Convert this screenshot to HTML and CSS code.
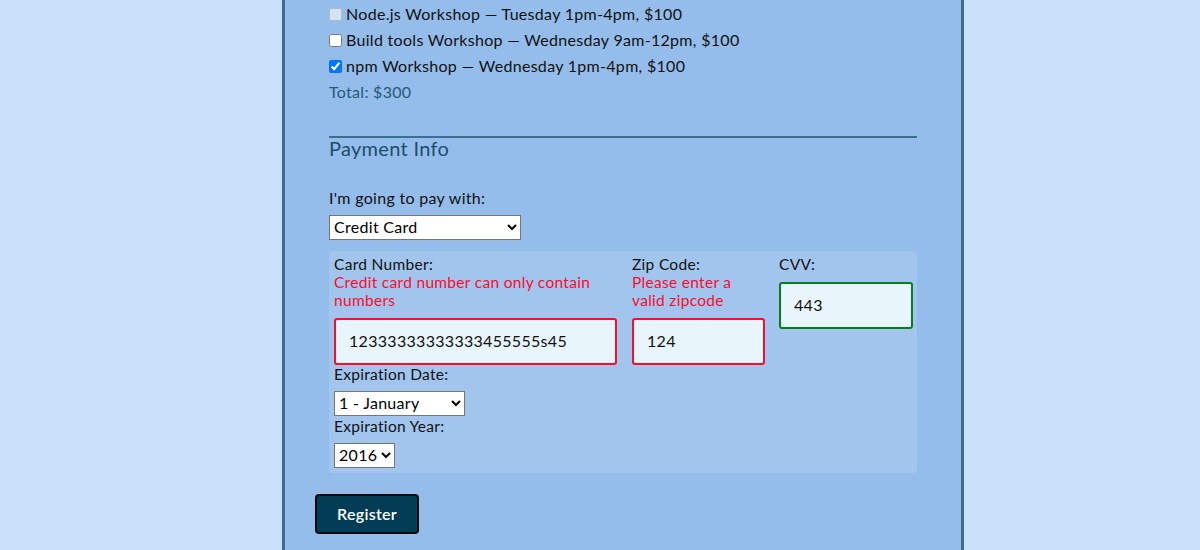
FILE: index.html
```html
<!DOCTYPE html>
<html>
<head>
<meta charset="utf-8">
<link rel="stylesheet" href="styles.css">
</head>
<body>
<div class="page">
  <form class="card">
    <div class="content">
      <ul class="workshops">
        <li><input type="checkbox" disabled><span>Node.js Workshop — Tuesday 1pm-4pm, $100</span></li>
        <li><input type="checkbox"><span>Build tools Workshop — Wednesday 9am-12pm, $100</span></li>
        <li><input type="checkbox" checked><span>npm Workshop — Wednesday 1pm-4pm, $100</span></li>
        <li class="total">Total: $300</li>
      </ul>
      <h2 class="section-title">Payment Info</h2>
      <label class="pay-label">I'm going to pay with:</label>
      <select class="pay-select">
        <option>Credit Card</option>
        <option>PayPal</option>
        <option>Bitcoin</option>
      </select>
      <div class="cc-box">
        <div class="cc-grid">
          <div class="field">
            <label>Card Number:</label>
            <div class="error">Credit card number can only contain numbers</div>
            <input class="text-input invalid" type="text" value="12333333333333455555s45">
          </div>
          <div class="field">
            <label>Zip Code:</label>
            <div class="error">Please enter a valid zipcode</div>
            <input class="text-input invalid" type="text" value="124">
          </div>
          <div class="field">
            <label>CVV:</label>
            <input class="text-input valid" type="text" value="443">
          </div>
        </div>
        <div class="exp">
          <label>Expiration Date:</label>
          <select class="month-select">
            <option>1 - January</option>
          </select>
          <label>Expiration Year:</label>
          <select class="year-select">
            <option>2016</option>
          </select>
        </div>
      </div>
    </div>
    <div class="actions">
      <button type="button" class="register">Register</button>
    </div>
  </form>
</div>
</body>
</html>
```
FILE: styles.css
```css
* { box-sizing: border-box; }
html, body {
  margin: 0;
  padding: 0;
  background: #cbe1fa;
  font-family: Lato, "Noto Sans", sans-serif;
  color: #111;
  font-size: 16px;
  letter-spacing: 0.3px;
}
.page {
  padding-left: 282px;
  height: 550px;
  overflow: hidden;
}
.card {
  width: 682px;
  height: 560px;
  background: #94bdeb;
  border-left: 3px solid #3b6e90;
  border-right: 3px solid #3b6e90;
}
.content {
  padding: 1px 44px 0 44px;
}
.workshops {
  list-style: none;
  margin: 0;
  padding: 0;
}
.workshops li {
  display: flex;
  align-items: center;
  height: 26px;
  line-height: 26px;
}
.workshops input {
  margin: 0 4px 0 0;
  width: 13px;
  height: 13px;
}
.total {
  color: #255978;
}
.section-title {
  margin: 31px 0 0 0;
  border-top: 2px solid #3b6e90;
  font-weight: normal;
  font-size: 20px;
  line-height: 20px;
  padding-top: 0;
  color: #1c4e6b;
}
.pay-label {
  display: block;
  margin-top: 30px;
  line-height: 20px;
}
select {
  font-family: inherit;
  font-size: 16px;
  letter-spacing: 0.3px;
  height: 25px;
  padding-bottom: 2px;
  background: #fff;
  color: #000;
}
.pay-select {
  display: block;
  margin-top: 7px;
  width: 192px;
}
.cc-box {
  margin-top: 11px;
  background: #a2c5ee;
  border-radius: 4px;
  padding: 4px 5px 5px 5px;
}
.cc-grid {
  display: grid;
  grid-template-columns: 283px 133px 133px;
  column-gap: 15px;
}
.cc-grid .field:last-child {
  margin-left: -1px;
}
.field label, .exp label {
  display: block;
  line-height: 18px;
  font-size: 15.5px;
}
.error {
  color: #ff0a2a;
  font-size: 15.5px;
  line-height: 18px;
}
.text-input {
  display: block;
  width: 100%;
  height: 47px;
  margin-top: 9px;
  border-radius: 3px;
  background: #e8f5fa;
  font-family: inherit;
  font-size: 16px;
  letter-spacing: 0.3px;
  padding: 0 13px 2px 13px;
  color: #111;
  outline: none;
}
.invalid { border: 2px solid #ff0a2a; }
.valid { border: 2px solid #05801f; }
.month-select {
  display: block;
  width: 131px;
  margin: 8px 0 1px 0;
}
.year-select {
  display: block;
  width: 61px;
  margin-top: 8px;
}
.actions {
  padding: 21px 0 0 30px;
}
.register {
  width: 104px;
  height: 40px;
  padding-bottom: 3px;
  background: #033c55;
  color: #fff;
  border: 2px solid #0a0a0a;
  border-radius: 4px;
  font-family: inherit;
  font-size: 16px;
  letter-spacing: 0.3px;
  font-weight: 600;
  cursor: pointer;
}
```
